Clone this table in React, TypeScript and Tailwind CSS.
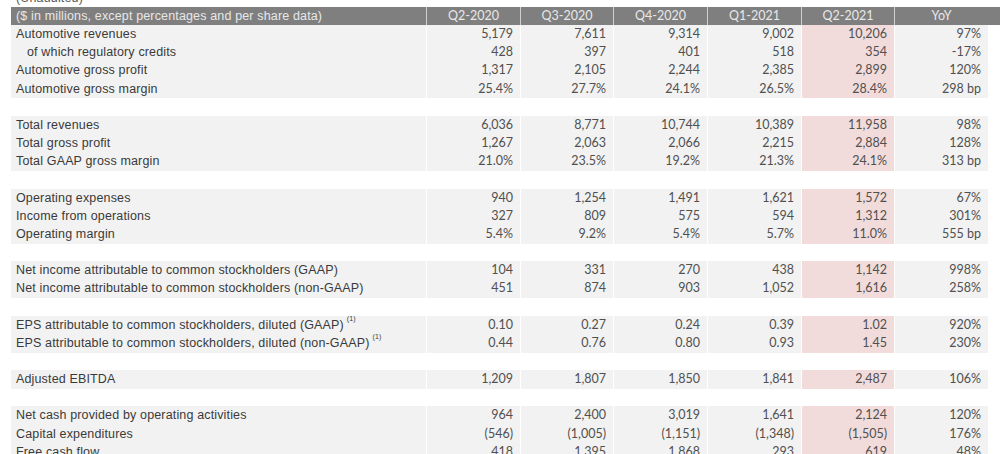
import React from "react";

type Row = { label: string; vals: string[]; indent?: boolean; sup?: boolean } | null;

const rows: Row[] = [
  { label: "Automotive revenues", vals: ["5,179", "7,611", "9,314", "9,002", "10,206", "97%"] },
  { label: "of which regulatory credits", indent: true, vals: ["428", "397", "401", "518", "354", "-17%"] },
  { label: "Automotive gross profit", vals: ["1,317", "2,105", "2,244", "2,385", "2,899", "120%"] },
  { label: "Automotive gross margin", vals: ["25.4%", "27.7%", "24.1%", "26.5%", "28.4%", "298 bp"] },
  null,
  { label: "Total revenues", vals: ["6,036", "8,771", "10,744", "10,389", "11,958", "98%"] },
  { label: "Total gross profit", vals: ["1,267", "2,063", "2,066", "2,215", "2,884", "128%"] },
  { label: "Total GAAP gross margin", vals: ["21.0%", "23.5%", "19.2%", "21.3%", "24.1%", "313 bp"] },
  null,
  { label: "Operating expenses", vals: ["940", "1,254", "1,491", "1,621", "1,572", "67%"] },
  { label: "Income from operations", vals: ["327", "809", "575", "594", "1,312", "301%"] },
  { label: "Operating margin", vals: ["5.4%", "9.2%", "5.4%", "5.7%", "11.0%", "555 bp"] },
  null,
  { label: "Net income attributable to common stockholders (GAAP)", vals: ["104", "331", "270", "438", "1,142", "998%"] },
  { label: "Net income attributable to common stockholders (non-GAAP)", vals: ["451", "874", "903", "1,052", "1,616", "258%"] },
  null,
  { label: "EPS attributable to common stockholders, diluted (GAAP)", sup: true, vals: ["0.10", "0.27", "0.24", "0.39", "1.02", "920%"] },
  { label: "EPS attributable to common stockholders, diluted (non-GAAP)", sup: true, vals: ["0.44", "0.76", "0.80", "0.93", "1.45", "230%"] },
  null,
  { label: "Adjusted EBITDA", vals: ["1,209", "1,807", "1,850", "1,841", "2,487", "106%"] },
  null,
  { label: "Net cash provided by operating activities", vals: ["964", "2,400", "3,019", "1,641", "2,124", "120%"] },
  { label: "Capital expenditures", vals: ["(546)", "(1,005)", "(1,151)", "(1,348)", "(1,505)", "176%"] },
  { label: "Free cash flow", vals: ["418", "1,395", "1,868", "293", "619", "48%"] },
];

const heads = ["Q2-2020", "Q3-2020", "Q4-2020", "Q1-2021", "Q2-2021", "YoY"];

const grid = "grid grid-cols-[415px_94px_93px_94px_94px_93px_94px] h-[18.16px]";
const labelFont = { fontFamily: '"Liberation Sans", Arial, sans-serif' };
const numFont = { fontFamily: 'Lato, "Liberation Sans", sans-serif' };

export default function App() {
  return (
    <div className="w-[1000px] h-[454px] overflow-hidden bg-white pl-[11px]">
      <div className="h-[7px] overflow-hidden">
        <div className="mt-[-9px] pl-[5px] text-[12.5px] leading-[14px] tracking-[0.15px] text-[#595959]" style={labelFont}>
          (Unaudited)
        </div>
      </div>

      <div className={grid + " bg-[#7f7f7f] text-[#e8e8e8]"}>
        <div className="flex items-center pl-[5px] text-[12.5px] tracking-[0.15px]" style={labelFont}>
          ($ in millions, except percentages and per share data)
        </div>
        {heads.map((h) => (
          <div key={h} className="flex items-center justify-center border-l border-[#d0d0d0] text-[12.5px]" style={numFont}>
            {h}
          </div>
        ))}
      </div>

      {rows.map((r, i) =>
        r === null ? (
          <div key={i} className="h-[18.16px]" />
        ) : (
          <div key={i} className={grid}>
            <div
              className={
                "flex items-center bg-[#f2f2f2] border-b border-white text-[12.5px] tracking-[0.15px] text-[#3a3a3a] whitespace-nowrap " +
                (r.indent ? "pl-[16px]" : "pl-[5px]")
              }
              style={labelFont}
            >
              {r.label}
              {r.sup && <sup className="ml-[3px] text-[7px] top-[-0.9em]">(1)</sup>}
            </div>
            {r.vals.map((v, j) => (
              <div
                key={j}
                className={
                  "flex items-center justify-end pr-[7px] border-b border-l border-white text-[12.5px] text-[#505050] " +
                  (j === 4 ? "bg-[#f2dcdb]" : "bg-[#f2f2f2]")
                }
                style={numFont}
              >
                {v}
              </div>
            ))}
          </div>
        )
      )}
    </div>
  );
}
